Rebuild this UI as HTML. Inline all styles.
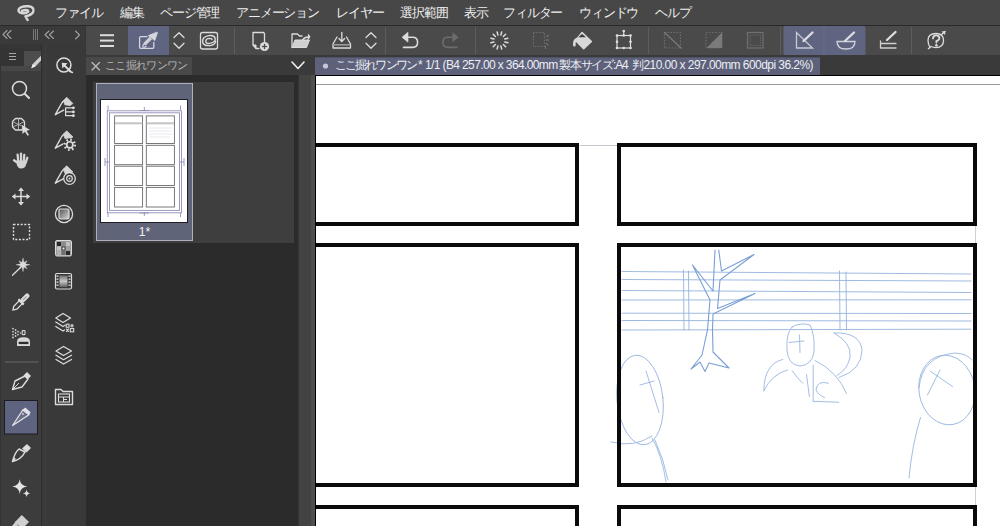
<!DOCTYPE html>
<html><head><meta charset="utf-8">
<style>
*{margin:0;padding:0;box-sizing:border-box}
html,body{width:1000px;height:526px;overflow:hidden;background:#3b3b3b;font-family:"Liberation Sans",sans-serif;color:#e6e6e6}
.a{position:absolute}
#menu{left:0;top:0;width:1000px;height:26px;background:#474747;border-bottom:1px solid #2a2a2a}
#menu span{position:absolute;top:5px;font-size:13px;line-height:16px;color:#efefef;white-space:nowrap;letter-spacing:-1.15px}
#row2{left:0;top:26px;width:86px;height:18px;background:#3a3a3a}
#col1{left:0;top:44px;width:42px;height:482px;background:#3c3c3c;border-left:1px solid #333;border-right:1px solid #2f2f2f}
#col2{left:42px;top:44px;width:44px;height:482px;background:#393939}
#tb{left:85px;top:26px;width:915px;height:29px;background:#4a4a4a;border-left:1px solid #363636}
#tabrow{left:86px;top:55px;width:914px;height:20px;background:#3a3a3a}
#ptab{left:86px;top:57px;width:106px;height:18px;background:#494949}
#ptab span{position:absolute;left:19px;top:1px;font-size:11px;line-height:15px;color:#b4b4b4;letter-spacing:-0.7px;white-space:nowrap}
#ctab{left:315px;top:57px;width:505px;height:18px;background:#5d6179;border-top:1px solid #4f536a}
#ctab span{position:absolute;left:19px;top:0px;font-size:12px;line-height:15px;color:#eceef4;letter-spacing:-0.79px;white-space:nowrap}
#panel{left:86px;top:75px;width:212px;height:451px;background:#2b2b2b}
#plist{left:93px;top:82px;width:201px;height:161px;background:#3e3e3e}
#gutter{left:298px;top:75px;width:17px;height:451px;background:#434343;border-left:1px solid #323232;border-right:4px solid #4f4f4f}
#canvas{left:315px;top:75px;width:685px;height:451px;background:#fff;overflow:hidden;border-left:1px solid #000;border-top:1px solid #000}
#thumb{left:96px;top:83px;width:97px;height:158px;background:#5f6479;border:1px solid #aeb0bc}
#thumb .lbl{position:absolute;left:0;width:95px;top:141px;text-align:center;font-size:12px;line-height:14px;color:#f2f2f2}
#page{left:100px;top:99px;width:88px;height:124px;background:#fff;border:1px solid #1e1e24}
#ui{left:0;top:0}
</style></head><body>
<div id="menu" class="a">
<span style="left:55px">ファイル</span>
<span style="left:120px">編集</span>
<span style="left:160px">ページ管理</span>
<span style="left:236px">アニメーション</span>
<span style="left:336px">レイヤー</span>
<span style="left:400px">選択範囲</span>
<span style="left:464px">表示</span>
<span style="left:503px">フィルター</span>
<span style="left:579px">ウィンドウ</span>
<span style="left:655px">ヘルプ</span>
</div>
<div id="row2" class="a"></div>
<div id="col1" class="a"></div>
<div id="col2" class="a"></div>
<div id="tb" class="a"></div>
<div id="tabrow" class="a"></div>
<div id="ptab" class="a"><span>ここ掘れワンワン</span></div>
<div id="ctab" class="a"><span id="t1" style="left:20px;letter-spacing:-1.9px">ここ掘れワンワン</span><span id="t2" style="left:103px">*</span><span id="t3" style="left:110px;letter-spacing:-0.62px">1/1 (B4 257.00 x 364.00mm</span><span id="t4" style="left:244px;letter-spacing:-1.2px">製本サイズ:A4</span><span id="t5" style="left:317px">判</span><span id="t6" style="left:328.5px;letter-spacing:-0.56px">210.00 x 297.00mm 600dpi 36.2%)</span></div>
<div id="panel" class="a"></div>
<div id="plist" class="a"></div>
<div id="gutter" class="a"></div>
<div id="thumb" class="a"><div class="lbl">1*</div></div>
<div id="page" class="a"></div>
<div id="canvas" class="a">
<svg width="685" height="451" style="position:absolute;left:-1px;top:-1px">
<line x1="0" y1="9.5" x2="685" y2="9.5" stroke="#9a9a9a" stroke-width="1"/>
<line x1="265" y1="70.5" x2="302" y2="70.5" stroke="#c4c4cc" stroke-width="1"/>
<line x1="660.5" y1="151" x2="660.5" y2="168" stroke="#d0d0d8" stroke-width="1"/><line x1="660.5" y1="412" x2="660.5" y2="430" stroke="#d0d0d8" stroke-width="1"/>
<clipPath id="pc"><rect x="290" y="172" width="368" height="236"/></clipPath><g clip-path="url(#pc)"><g transform="translate(-315,-75)" fill="none" stroke="#98b5e0" stroke-width="0.9" stroke-linecap="round" stroke-linejoin="round">
<g stroke="#94b2dc">
<line x1="622" y1="271.5" x2="971" y2="274"/>
<line x1="622" y1="279.5" x2="971" y2="281"/>
<line x1="622" y1="290.5" x2="971" y2="292.5"/>
<line x1="622" y1="300" x2="971" y2="299.8"/>
<line x1="622" y1="313.2" x2="971" y2="313.5"/>
<line x1="622" y1="320.5" x2="971" y2="321"/>
<line x1="622" y1="330" x2="971" y2="329.2"/>
<line x1="683.5" y1="270" x2="684" y2="330"/>
<line x1="688.5" y1="271" x2="689" y2="330"/>
<line x1="839.5" y1="271" x2="840" y2="330"/>
<line x1="846" y1="272" x2="846.5" y2="330"/>
</g>
<path d="M715,250 L713,291 L692.5,265 L710,300 L707.5,330 L702,355 L691,369 L700,362 L705,371.5 L709,363 L729,368 L713,352 L712.5,330 L713,314 L755,293.5 L717.5,308.5 L720,280 L754,254.5 L721.5,271 L718.75,250" stroke="#7a9fd4" stroke-width="1.1"/>
<path d="M792,327 Q800,322 810,325 Q815,335 814,352 Q812,365 800,366 Q788,365 787,350 Q786,333 792,327 Z"/>
<path d="M789,342.5 L804,341 M799.5,335 L800,352.5"/>
<path d="M834,333 Q860,332 862,350 Q862,370 839,377.5"/>
<path d="M834,333 Q852,343 850,357 Q848,369 837,375.6"/>
<path d="M782.8,359.4 Q764,364 763.8,390.8 M787.5,370 Q772,374 763.8,390.8"/>
<path d="M792.3,370.8 Q797,378 802.7,383.2 M806.5,374.6 L809.4,396.5 M813.2,365 L813.2,401.3 M815,360.4 Q838,372 846.5,393.6 M828.4,383.2 Q817,380 816,389.8 Q818,395 824.6,397.5 M813.2,401.3 L838.9,402.2"/>
<ellipse cx="947" cy="390" rx="28" ry="35" transform="rotate(-10 947 390)"/>
<path d="M919,388 Q922,356 955,353 Q968,354 972,360"/>
<path d="M930,371 L952.5,386.5 M940,370 L927.5,395"/>
<path d="M920.5,417.5 Q912,445 909,478"/>
<ellipse cx="640" cy="400" rx="23" ry="45" transform="rotate(-6 640 400)"/>
<path d="M640,385 L654,381 M646,371 L659,412.5"/>
<path d="M611,442 Q634,448 652,436 M652,438 Q662,455 666,482 M655,440 Q664,460 668,480"/>
</g></g>

<g fill="none" stroke="#0a0a0a" stroke-width="4">
<rect x="-20" y="70" width="282" height="79"/>
<rect x="304" y="70" width="356" height="79"/>
<rect x="-20" y="170" width="282" height="240"/>
<rect x="304" y="170" width="356" height="240"/>
<rect x="-20" y="432" width="282" height="100"/>
<rect x="304" y="432" width="356" height="100"/>
</g>
</svg>
</div>
<svg id="ui" class="a" width="1000" height="526">
<g fill="none" stroke="#a0a0a0" stroke-width="1.1" stroke-linecap="round" stroke-linejoin="round">
</g><!-- logo -->
<path d="M27.6,20 L25.5,16.3 Q31.5,15 33.2,11.8 Q34.8,7.2 28.5,6.3 Q21,5.7 18.8,9.2 Q17.6,12.2 21.5,13 Q26,13.8 28.2,11.6 Q28.4,10 25.5,10.1 L22,10.7" fill="none" stroke="#d6d6d6" stroke-width="2.5" stroke-linecap="round" stroke-linejoin="round"/>
<g fill="none" stroke="#a0a0a0" stroke-width="1.1" stroke-linecap="round" stroke-linejoin="round">
<!-- row2 chevrons -->
<polyline points="7,30.5 3,34.5 7,38.5"/><polyline points="11,30.5 7,34.5 11,38.5"/>
<polyline points="49,31 45,34.75 49,38.5"/><polyline points="53.5,31 49.5,34.75 53.5,38.5"/>
<polyline points="75.5,31 79.5,35 75.5,39"/>
</g>
<g stroke="#808080" stroke-width="0.9"><line x1="33.5" y1="29" x2="33.5" y2="40"/><line x1="35.5" y1="29" x2="35.5" y2="40"/><line x1="37.5" y1="29" x2="37.5" y2="40"/></g>
<!-- col1 tab header -->
<rect x="1" y="44" width="40" height="7" fill="#363636"/><rect x="1" y="48" width="23" height="18" fill="#343434"/>
<rect x="24" y="51" width="17" height="15" fill="#4d4d4d"/>
<rect x="1" y="66" width="40" height="5" fill="#474747"/>
<g stroke="#a8a8a8" stroke-width="1"><line x1="9" y1="53.5" x2="16" y2="53.5"/><line x1="9" y1="56.5" x2="16" y2="56.5"/><line x1="9" y1="59.5" x2="16" y2="59.5"/></g>
<path d="M31.3,68.2 L32.8,64 L41,55.8 L41,60.5 L35.6,66.3 Z" fill="#d0d0d0"/><path d="M31.3,68.2 L32.8,64 L35.6,66.3 Z" fill="#ececec"/>
<line x1="41.5" y1="44" x2="41.5" y2="526" stroke="#2e2e2e" stroke-width="1"/>
<line x1="45.5" y1="44" x2="45.5" y2="526" stroke="#3f3f3f" stroke-width="1"/>

<g fill="none" stroke="#dcdcdc" stroke-width="1.5" stroke-linecap="round" stroke-linejoin="round">
<!-- magnifier -->
<circle cx="19.5" cy="88.5" r="7"/>
<line x1="24.7" y1="93.7" x2="29" y2="98" stroke-width="2"/>
<!-- 3d cube -->
<path d="M12.5,121.5 L15.5,118.5 L21.5,118.5 L24.5,121.5 L24.5,127 L21.5,130 L15.5,130 L12.5,127 Z" stroke-width="1.3"/>
<path d="M18.5,118.5 L18.5,130 M12.5,121.5 L18.5,124.5 L24.5,121.5 M12.5,127 L18.5,124.5 L24.5,127" stroke-width="0.9" stroke="#b8b8b8"/>
<!-- move cross -->
<line x1="21" y1="189" x2="21" y2="204"/><line x1="13" y1="196.5" x2="29" y2="196.5"/>
<!-- dashed rect -->
<rect x="13.5" y="224.5" width="16" height="15" stroke-dasharray="2,1.6" stroke-width="1.4" stroke-linecap="butt"/>
<!-- magic wand -->
<line x1="12.5" y1="275.2" x2="20.5" y2="267.5" stroke-width="1.3"/>
<!-- separator handled below -->
</g>
<!-- cursor on cube -->
<path d="M22,125 L30,130 L26.5,130.8 L29,135 L27.5,135.8 L25,131.8 L22.5,134 Z" fill="#dcdcdc"/>
<!-- hand -->
<g stroke="#d4d4d4" stroke-width="2.3" stroke-linecap="round" fill="none">
<line x1="14" y1="160.3" x2="17.5" y2="162.8"/>
<line x1="17.6" y1="154.6" x2="18.2" y2="161"/>
<line x1="21" y1="153.6" x2="21" y2="160.5"/>
<line x1="24.3" y1="154.8" x2="23.8" y2="161"/>
<line x1="27.3" y1="157.8" x2="25.8" y2="162.5"/>
</g>
<path d="M16.3,160.5 L26.8,160.5 Q26.5,165.5 24.5,167.5 Q22.5,168.8 20.5,168.5 Q18.2,168 17,165.5 Z" fill="#d4d4d4"/>
<!-- move arrowheads -->
<g fill="#dcdcdc">
<path d="M21,187.5 L24,191 L18,191 Z"/><path d="M21,205.5 L24,202 L18,202 Z"/>
<path d="M12,196.5 L15.5,193.5 L15.5,199.5 Z"/><path d="M30,196.5 L26.5,193.5 L26.5,199.5 Z"/>
</g>
<!-- magic wand star -->
<polygon points="23.00,257.80 23.96,262.49 27.10,260.70 25.31,263.84 30.00,264.80 25.31,265.76 27.10,268.90 23.96,267.11 23.00,271.80 22.04,267.11 18.90,268.90 20.69,265.76 16.00,264.80 20.69,263.84 18.90,260.70 22.04,262.49" fill="#dcdcdc" stroke="#dcdcdc" stroke-width="0.3"/>
<!-- dropper -->
<g transform="translate(20.6,302.4) rotate(-45)">
<path d="M0,-2.1 L-7.5,-2.1 L-11,0 L-7.5,2.1 L0,2.1" fill="none" stroke="#dcdcdc" stroke-width="1.3" stroke-linejoin="round"/>
<rect x="-0.5" y="-3.8" width="2.4" height="7.6" rx="0.6" fill="#dcdcdc"/>
<rect x="1.5" y="-2.3" width="10" height="4.6" rx="2" fill="#dcdcdc"/>
<rect x="3.5" y="-0.6" width="5" height="1.2" fill="#9a9a9a"/>
</g>
<!-- spray -->
<g fill="#d0d0d0">
<circle cx="13" cy="328.6" r="0.9"/><circle cx="13" cy="331.6" r="0.9"/><circle cx="13" cy="334.6" r="0.9"/><circle cx="13" cy="337.5" r="0.9"/>
<circle cx="15.6" cy="330" r="0.9"/><circle cx="15.6" cy="333" r="0.9"/><circle cx="15.6" cy="336" r="0.9"/>
<circle cx="18" cy="331.6" r="0.9"/><circle cx="18" cy="334.6" r="0.9"/><circle cx="20.5" cy="333" r="0.8"/>
</g>
<rect x="22.2" y="330.6" width="2.8" height="4" rx="0.6" fill="none" stroke="#d8d8d8" stroke-width="1.1"/>
<path d="M17,346 L17,341.5 Q17,337.2 23.5,337.2 Q30,337.2 30,341.5 L30,346 Z" fill="#d8d8d8"/>
<rect x="18.6" y="341.8" width="9.8" height="2.3" fill="#2e2e2e"/>
<line x1="5" y1="362" x2="38.5" y2="362" stroke="#585858" stroke-width="1.5"/>
<!-- pen nib -->
<path d="M12.5,389.5 L15,381 L25,376 L28,379 L22,387 Z" fill="none" stroke="#dcdcdc" stroke-width="1.4" stroke-linejoin="round"/>
<path d="M23.5,375.5 L27,372 L31,376 L27.5,379.5 Z" fill="#dcdcdc"/>
<line x1="12.5" y1="389.5" x2="19" y2="383" stroke="#dcdcdc" stroke-width="1"/>
<!-- active pencil box -->
<rect x="4.5" y="400.5" width="33" height="33.5" fill="#5e6380" stroke="#1c1c22" stroke-width="1"/>
<path d="M12.6,425.5 L22.8,410 L29,414.8 Z" fill="#6a6e88" stroke="#e2e2e8" stroke-width="1.3" stroke-linejoin="round"/>
<path d="M22.5,409.8 L25.3,407.6 L30.6,412.2 L29.2,415 Q25.5,412.5 22.5,409.8 Z" fill="#e0e0e6"/><circle cx="23" cy="414" r="1" fill="#c8c8d0"/>
<!-- brush -->
<path d="M12.5,461.5 C14,456 15,452 19,449 L25,452 C23,456 19,460 12.5,461.5 Z" fill="none" stroke="#dcdcdc" stroke-width="1.5" stroke-linejoin="round"/>
<path d="M22,448.5 L27,444 L31,448 L26.5,452.5 Z" fill="#dcdcdc"/>
<path d="M12.5,461.5 L16,459 L14.5,457.5 Z" fill="#dcdcdc"/>
<!-- sparkles -->
<path d="M19.7,479.3 Q20.3,485.9 27.2,486.5 Q20.3,487.1 19.7,494 Q19.1,487.1 12.2,486.5 Q19.1,485.9 19.7,479.3 Z" fill="#e4e4e4"/>
<path d="M26.6,489.6 Q26.9,493.1 30.4,493.4 Q26.9,493.7 26.6,497.2 Q26.3,493.7 22.8,493.4 Q26.3,493.1 26.6,489.6 Z" fill="#e4e4e4"/>
<!-- bottom fill shape -->
<path d="M21.8,515 L29,522 L22,529 L15,522 Z" fill="#cfcfcf"/>
<path d="M12,526 L16,521 L18,526 Z" fill="#cfcfcf"/>

<!-- col2 icons -->
<g fill="none" stroke="#dcdcdc" stroke-width="1.5" stroke-linecap="round" stroke-linejoin="round">
<circle cx="63.9" cy="65" r="7"/>
<line x1="64.5" y1="65.5" x2="70" y2="71" stroke-width="2"/>
<line x1="69.5" y1="71.2" x2="72.5" y2="72.5" stroke-width="1.5"/>
</g>
<path d="M61.8,62.8 L67.6,63.3 L62.3,68.6 Z" fill="#dcdcdc"/>
<!-- pen + list -->
<g id="pen1">
<path d="M55.3,114.7 L61.5,103.5 Q62.5,101.5 64.5,100.5 M55.3,114.7 L63.7,110.2" fill="none" stroke="#dcdcdc" stroke-width="1.4" stroke-linecap="round" stroke-linejoin="round"/>
<path d="M63.5,100.5 L66.7,97.3 L72.9,103.5 L70.1,105.6 L64.8,104.8 Z" fill="#d4d4d4" stroke="#d4d4d4" stroke-width="0.8" stroke-linejoin="round"/>
</g>
<use href="#pen1" transform="translate(0,33.5)"/>
<use href="#pen1" transform="translate(0,68.5)"/>
<g fill="none" stroke="#dcdcdc" stroke-width="1.2">
<path d="M65.6,107.3 L65.6,116 M65.6,107.8 L73,107.8 M65.6,111.9 L73,111.9 M65.6,115.7 L73,115.7"/>
</g>
<g fill="#e0e0e0"><circle cx="73.4" cy="107.8" r="1.4"/><circle cx="73.4" cy="111.9" r="1.4"/><circle cx="73.4" cy="115.7" r="1.4"/></g>
<!-- gear -->
<circle cx="69.8" cy="144.8" r="6.6" fill="#393939"/>
<circle cx="69.8" cy="144.8" r="5" fill="none" stroke="#dcdcdc" stroke-width="2.4" stroke-dasharray="1.6,2.3"/>
<circle cx="69.8" cy="144.8" r="3.9" fill="#dcdcdc"/><circle cx="69.8" cy="144.8" r="2.2" fill="#393939"/>
<!-- target -->
<circle cx="69.5" cy="178.5" r="5.8" fill="#393939" stroke="#dcdcdc" stroke-width="1.3"/>
<circle cx="69.5" cy="178.5" r="2.8" fill="none" stroke="#dcdcdc" stroke-width="1.2"/>
<circle cx="69.5" cy="178.5" r="0.9" fill="#dcdcdc"/>
<!-- circle square -->
<circle cx="64" cy="214" r="8.6" fill="none" stroke="#dcdcdc" stroke-width="1.3"/>
<defs><linearGradient id="gsq" x1="0" y1="0" x2="1" y2="1"><stop offset="0" stop-color="#505050"/><stop offset="1" stop-color="#d8d8d8"/></linearGradient>
<linearGradient id="gfilm" x1="0" y1="0" x2="0" y2="1"><stop offset="0" stop-color="#707070"/><stop offset="0.5" stop-color="#c8c8c8"/><stop offset="1" stop-color="#606060"/></linearGradient></defs>
<rect x="59" y="209" width="10" height="10" rx="1.5" fill="url(#gsq)" stroke="#dcdcdc" stroke-width="1.2"/>
<!-- grid palette -->
<rect x="55.5" y="240.5" width="16" height="15.5" rx="1.5" fill="#9a9a9a" stroke="#dcdcdc" stroke-width="1"/>
<g>
<rect x="57" y="242" width="4" height="4" fill="#2a2a2a"/><rect x="61.5" y="242" width="4" height="4" fill="#8a8a8a"/><rect x="66" y="242" width="4" height="4" fill="#c0c0c0"/>
<rect x="57" y="246.5" width="4" height="4" fill="#c8c8c8"/><rect x="61.5" y="246.5" width="4" height="4" fill="#3a3a3a"/><rect x="66" y="246.5" width="4" height="4" fill="#a0a0a0"/>
<rect x="57" y="251" width="4" height="4" fill="#b0b0b0"/><rect x="61.5" y="251" width="4" height="4" fill="#707070"/><rect x="66" y="251" width="4" height="4" fill="#2a2a2a"/>
<rect x="62.5" y="247.5" width="2" height="2" fill="#eee"/>
</g>
<!-- film -->
<rect x="55.5" y="273.5" width="16" height="15.5" rx="1.5" fill="#393939" stroke="#dcdcdc" stroke-width="1.2"/>
<rect x="59.5" y="275.5" width="8" height="11.5" fill="url(#gfilm)"/>
<g fill="#dcdcdc"><rect x="56.5" y="275.5" width="2" height="1.3"/><rect x="56.5" y="278.5" width="2" height="1.3"/><rect x="56.5" y="281.5" width="2" height="1.3"/><rect x="56.5" y="284.5" width="2" height="1.3"/>
<rect x="68.5" y="275.5" width="2" height="1.3"/><rect x="68.5" y="278.5" width="2" height="1.3"/><rect x="68.5" y="281.5" width="2" height="1.3"/><rect x="68.5" y="284.5" width="2" height="1.3"/></g>
<!-- layers with shapes -->
<g fill="none" stroke="#dcdcdc" stroke-width="1.3" stroke-linejoin="round" stroke-linecap="round">
<path d="M63,313.5 L70.5,318 L63,322.5 L55.8,318 Z"/>
<path d="M55.8,322 L63,326.5 L65,325.3"/>
<path d="M55.8,326.5 L63,331 L64.5,330"/>
<path d="M63.5,346.5 L71.5,351 L63.5,355.5 L56,351 Z"/>
<path d="M56,355.2 L63.5,359.7 L71.5,355.2"/>
<path d="M56,359.5 L63.5,364 L71.5,359.5"/>
</g>
<g fill="none" stroke="#dcdcdc" stroke-width="1.1">
<rect x="66.2" y="324.2" width="2.8" height="3"/><rect x="70.3" y="328.6" width="3.4" height="3.2"/>
<path d="M66.2,328.6 L68.8,331.8 M68.8,328.6 L66.2,331.8"/>
</g>
<circle cx="72" cy="325.7" r="1.7" fill="#bdbdbd"/>
<!-- folder -->
<path d="M55.5,404.5 L55.5,389.5 L61,389.5 L63,391.5 L72.5,391.5 L72.5,404.5 Z" fill="none" stroke="#dcdcdc" stroke-width="1.4" stroke-linejoin="round"/>
<rect x="58.5" y="394" width="11" height="8" fill="none" stroke="#dcdcdc" stroke-width="1.1"/>
<path d="M58.5,397 L69.5,397 M63.5,397 L63.5,402 M63.5,399.5 L67,399.5" stroke="#dcdcdc" stroke-width="1" fill="none"/>

<!-- TOOLBAR -->
<g stroke="#5d5d5d" stroke-width="1">
<line x1="234.5" y1="27" x2="234.5" y2="54"/><line x1="385.5" y1="27" x2="385.5" y2="54"/><line x1="475.5" y1="27" x2="475.5" y2="54"/><line x1="648.5" y1="27" x2="648.5" y2="54"/><line x1="780.5" y1="27" x2="780.5" y2="54"/><line x1="911.5" y1="27" x2="911.5" y2="54"/>
</g>
<rect x="128" y="26" width="41" height="29" fill="#5f6581"/>
<rect x="783.5" y="26" width="82" height="29" rx="1.5" fill="#5f6581"/>
<line x1="824" y1="26" x2="824" y2="55" stroke="#666c88" stroke-width="1"/>
<g stroke="#dcdcdc" stroke-width="2"><line x1="100" y1="35.2" x2="114" y2="35.2"/><line x1="100" y1="40.6" x2="114" y2="40.6"/><line x1="100" y1="46" x2="114" y2="46"/></g>
<g fill="none" stroke="#d6d6dc" stroke-width="1.3" stroke-linejoin="round" stroke-linecap="round">
<path d="M147,36.6 L140.6,36.6 Q139.6,36.6 139.6,37.6 L139.6,47.3 Q139.6,48.3 140.6,48.3 L152.8,48.3 Q153.8,48.3 153.8,47.3 L153.8,42.5"/>
<path d="M144.5,44 Q142,45.5 143,47 Q144,47.8 146,46.2" stroke-width="1.2"/>
</g>
<path d="M143.2,43.2 L149.5,36.8 L152,39.3 L145.6,45.6 Z" fill="#d0d0d8"/>
<path d="M148.3,35.6 L156.8,32.2 Q157.6,32 157.4,32.8 L154.8,40.6 Z" fill="#d6d6dc" stroke="#d6d6dc" stroke-width="0.8" stroke-linejoin="round"/>
<g fill="none" stroke="#dcdcdc" stroke-width="1.3" stroke-linecap="round" stroke-linejoin="round">
<polyline points="174,37.5 179,32.8 184,37.5"/><polyline points="174,43.2 179,48.2 184,43.2"/>
<polyline points="366,37.5 371,32.8 376,37.5"/><polyline points="366,43.2 371,48.2 376,43.2"/>
<rect x="200.5" y="32.5" width="17" height="16.5" rx="2"/>
<path d="M210,45.6 Q203.2,46.2 202.6,41.6 Q202.4,36.8 208.6,35.6 Q214.6,34.8 215.2,38.6 Q215.6,42.4 209.6,43.4 Q205.8,43.8 205.8,41.2 Q206,38.6 209.6,38.4 Q212,38.4 212,39.6" stroke-width="1.4"/>
<path d="M210,45.6 Q215,45 215.6,41.5" stroke-width="1.4"/>
<!-- new doc -->
<path d="M253,32.5 L263.5,32.5 L264.5,33.5 L264.5,41.5 M259,48.5 L256,48.5 L253,45 L253,32.5"/>
<!-- folder open -->
<path d="M292,47.5 L292,34 L297.5,34 L299.5,36 L302,36"/>
<path d="M301.5,42 C303,38 305,37 308.5,37"/>
<!-- tray -->
<path d="M337,37 L333,44 L333,48 L350.5,48 L350.5,44 L346.5,37"/>
<line x1="341.8" y1="32.5" x2="341.8" y2="41"/>
<polyline points="339,38.5 341.8,41.5 344.6,38.5"/>
<!-- undo -->
<path d="M405,37.2 L412.5,37.2 Q417.6,37.2 417.6,42.3 Q417.6,47.4 412.5,47.4 L403.5,47.4" stroke-width="1.6"/>
</g>
<path d="M402,37.2 L408,32.2 L408,42.2 Z" fill="#dcdcdc" stroke="#dcdcdc" stroke-width="0.6" stroke-linejoin="round"/>
<g fill="none" stroke="#6c6c6c" stroke-width="1.6" stroke-linecap="round" stroke-linejoin="round">
<path d="M455.5,37.2 L448,37.2 Q442.9,37.2 442.9,42.3 Q442.9,47.4 448,47.4 L457,47.4"/>
</g>
<path d="M458.5,37.2 L452.5,32.2 L452.5,42.2 Z" fill="#6c6c6c"/>
<!-- new doc plus circle & fold -->
<path d="M253,45 L256,45 L256,48.5" fill="#dcdcdc" stroke="#dcdcdc" stroke-width="1"/>
<circle cx="264.5" cy="46.5" r="4.6" fill="#dcdcdc"/>
<g stroke="#4a4a4a" stroke-width="1.3"><line x1="264.5" y1="43.8" x2="264.5" y2="49.2"/><line x1="261.8" y1="46.5" x2="267.2" y2="46.5"/></g>
<path d="M308.5,34.5 L310,37 L308,39.5 Z" fill="#dcdcdc" stroke="#dcdcdc" stroke-width="1"/>
<path d="M292,47.5 L295,40 L309.5,40 L306.5,47.5 Z" fill="#d0d0d0" stroke="#dcdcdc" stroke-width="1" stroke-linejoin="round"/>
<rect x="333.5" y="44" width="16.5" height="1.6" fill="#9a9a9a"/>
<!-- spinner -->
<g stroke="#dcdcdc" stroke-width="1.5" stroke-linecap="round"><line x1="504.81" y1="41.95" x2="507.90" y2="42.78"/><line x1="503.36" y1="44.46" x2="505.62" y2="46.72"/><line x1="500.85" y1="45.91" x2="501.68" y2="49.00"/><line x1="497.95" y1="45.91" x2="497.12" y2="49.00"/><line x1="495.44" y1="44.46" x2="493.18" y2="46.72"/><line x1="493.99" y1="41.95" x2="490.90" y2="42.78"/><line x1="493.99" y1="39.05" x2="490.90" y2="38.22"/><line x1="495.44" y1="36.54" x2="493.18" y2="34.28"/><line x1="497.95" y1="35.09" x2="497.12" y2="32.00"/><line x1="500.85" y1="35.09" x2="501.68" y2="32.00"/><line x1="503.36" y1="36.54" x2="505.62" y2="34.28"/><line x1="504.81" y1="39.05" x2="507.90" y2="38.22"/></g>
<!-- dim selection -->
<g fill="none" stroke="#6e6e6e" stroke-width="1.2">
<rect x="533.5" y="32.5" width="11" height="14" stroke-dasharray="1.6,1.4"/>
<path d="M546,40 L549,40 M546,43 L548.5,45.5 M545,46 L546,49 M546.5,37 L549,35" stroke-width="1.3"/>
</g>
<!-- fill bucket -->
<path d="M582.1,32.6 L591.4,41.5 L583.7,48.6 L575.6,40.4 Z" fill="#d8d8d8" stroke="#d8d8d8" stroke-width="1.6" stroke-linejoin="round"/>
<path d="M578.3,37.3 L582.1,34 L585.9,37.3 Z" fill="#3a3a3a"/>
<path d="M576.8,39.2 Q573.8,40.5 574.4,45.3" fill="none" stroke="#d8d8d8" stroke-width="2.6" stroke-linecap="round"/>
<!-- transform -->
<g fill="none" stroke="#dcdcdc" stroke-width="1.2">
<rect x="617" y="35.5" width="13.5" height="12.5"/>
<line x1="623.75" y1="31" x2="623.75" y2="35.5"/>
</g>
<g fill="#e0e0e0">
<circle cx="617" cy="35.5" r="1.3"/><circle cx="630.5" cy="35.5" r="1.3"/><circle cx="617" cy="48" r="1.3"/><circle cx="630.5" cy="48" r="1.3"/>
<circle cx="623.75" cy="35.5" r="1.3"/><circle cx="623.75" cy="48" r="1.3"/><circle cx="617" cy="41.75" r="1.3"/><circle cx="630.5" cy="41.75" r="1.3"/><circle cx="623.75" cy="31" r="1.3"/>
</g>
<!-- dim icons -->
<g fill="none" stroke="#6e6e6e" stroke-width="1.2">
<rect x="664.5" y="32.5" width="16" height="15.5" stroke-dasharray="1.5,1.5"/>
<line x1="664" y1="32" x2="681.5" y2="48.5" stroke="#7a7a7a"/>
<rect x="706" y="32.5" width="16" height="15.5" stroke-dasharray="1.5,1.5"/>
<rect x="747.5" y="32.5" width="15.5" height="15.5" stroke="#707070"/>
<rect x="750" y="35" width="10.5" height="10.5" stroke-dasharray="1.3,1.2" stroke="#6a6a6a"/>
</g>
<path d="M722,32.5 L722,48 L706.5,48 Z" fill="#7a7a7a"/>
<!-- snap icons -->
<g fill="none" stroke="#dcdce2" stroke-width="1.3" stroke-linecap="round">
<path d="M796.5,32.5 L796.5,48 L812.5,48 Z" stroke="#c8c9d2"/>
<path d="M837,41.5 L855,41.5 Q855,49 846,49 Q837,49 837,41.5 Z" stroke="#d0d1da"/>
<path d="M880.5,41 L880.5,48 L896,48 M880.5,43.5 L896,43.5" stroke="#d0d0d0"/>
</g>
<g stroke="#dcdce2" stroke-width="2.4" stroke-linecap="round">
<line x1="803.5" y1="41" x2="812.5" y2="32.5"/><line x1="845" y1="41" x2="854" y2="32.5"/><line x1="887" y1="40" x2="895.5" y2="32"/>
</g>
<!-- help -->
<g fill="none" stroke="#dcdcdc" stroke-width="1.3" stroke-linecap="round">
<path d="M930,47.5 Q928,44 928,40.5 Q928,33.5 936,33.5 Q943.5,33.5 943.5,40.5 Q943.5,47.5 936,47.5 Q933,47.5 931,46.5 L928,49 Z"/>
<path d="M933,38.4 Q933,35.4 936.2,35.4 Q939.4,35.4 939.4,38 Q939.4,40 936.4,41.2 L936.4,42.6" stroke-width="1.8"/>
<path d="M941,35 L945,31.5"/>
</g>
<circle cx="936.4" cy="45.2" r="1.2" fill="#dcdcdc"/>
<path d="M945.5,31 L941.5,31.5 L945,35 Z" fill="#dcdcdc"/>
<!-- thumbnail page contents -->
<g fill="none" stroke="#8e8eb8" stroke-width="0.9">
<rect x="107.3" y="110.8" width="74.2" height="102"/>
<rect x="109.5" y="112.8" width="70" height="97.6"/>
<path d="M108,105.5 L108,110 M180.5,105.5 L180.5,110 M144.3,107 L144.3,111 M139.5,110.5 L149,110.5 M105,162 L109,162 M105,158 L105,166 M180,162 L184,162 M184,158 L184,166 M139.5,213 L149,213 M144.3,212 L144.3,216 M108,213 L108,217 M180.5,213 L180.5,217"/>
</g>
<g fill="none" stroke="#6a6a6a" stroke-width="0.9">
<rect x="114.6" y="115.9" width="28" height="27.6"/>
<rect x="146.3" y="115.9" width="28.1" height="27.6"/>
<rect x="114.6" y="145.3" width="28" height="19.4"/>
<rect x="146.3" y="145.3" width="28.1" height="19.4"/>
<rect x="114.6" y="166.2" width="28" height="19.3"/>
<rect x="146.3" y="166.2" width="28.1" height="19.3"/>
<rect x="114.6" y="187.4" width="28" height="19.6"/>
<rect x="146.3" y="187.4" width="28.1" height="19.6"/>
</g>
<rect x="115" y="122.3" width="27.3" height="2" fill="#c4c4c4"/>
<rect x="146.7" y="122.3" width="27.3" height="2" fill="#c4c4c4"/>
<g stroke="#dfe3ea" stroke-width="0.8">
<line x1="149" y1="128" x2="172" y2="128"/><line x1="149" y1="131" x2="172" y2="131"/><line x1="149" y1="134" x2="172" y2="134"/><line x1="150" y1="137" x2="170" y2="137"/>
</g>

<!-- panel tab close x and chevron -->
<g stroke="#bdbdbd" stroke-width="1.2" stroke-linecap="round"><line x1="92" y1="62.5" x2="99.5" y2="70"/><line x1="99.5" y1="62.5" x2="92" y2="70"/></g>
<polyline points="292,62 298,68.5 304,62" fill="none" stroke="#f0f0f0" stroke-width="1.6" stroke-linecap="round" stroke-linejoin="round"/>
<circle cx="325.5" cy="66" r="2.6" fill="#c4c7d6"/>

</svg>
</body></html>
